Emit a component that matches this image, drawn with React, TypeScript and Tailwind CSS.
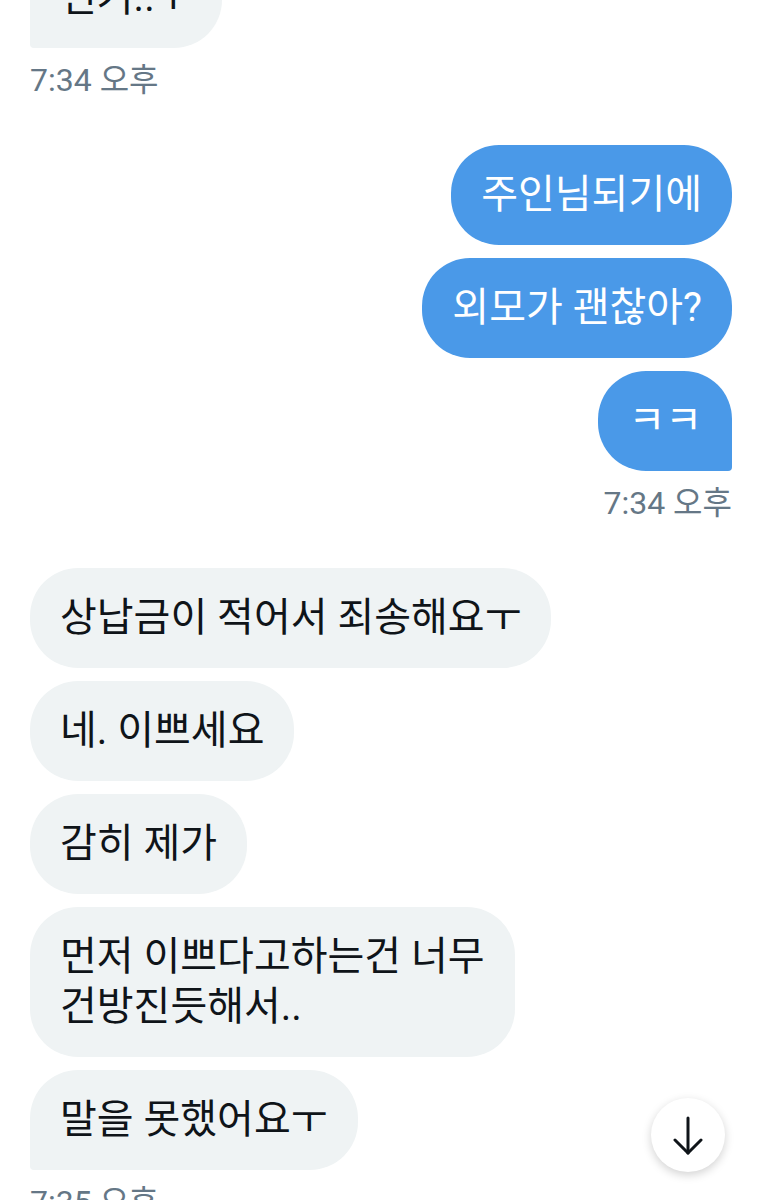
import { ReactNode } from "react";

type Side = "left" | "right";

interface Group {
  side: Side;
  messages: ReactNode[];
  time: string;
}

const groups: Group[] = [
  { side: "left", messages: ["런거..ㅜ"], time: "7:34 오후" },
  {
    side: "right",
    messages: ["주인님되기에", "외모가 괜찮아?", "ㅋㅋ"],
    time: "7:34 오후",
  },
  {
    side: "left",
    messages: [
      "상납금이 적어서 죄송해요ㅜ",
      "네. 이쁘세요",
      "감히 제가",
      <>
        먼저 이쁘다고하는건 너무
        <br />
        건방진듯해서..
      </>,
      "말을 못했어요ㅜ",
    ],
    time: "7:35 오후",
  },
];

const font = "font-['Roboto','Noto_Sans_CJK_KR',sans-serif]";

const Bubble = ({ side, last, children }: { side: Side; last: boolean; children: ReactNode }) => {
  const base = `px-[30px] py-[25px] text-[40px] leading-[50px] rounded-[48px] whitespace-nowrap ${font}`;
  if (side === "right") {
    return (
      <div
        className={`${base} self-end bg-[#4a99e8] text-white ${last ? "rounded-br-[4px]" : ""}`}
      >
        {children}
      </div>
    );
  }
  return (
    <div className={`${base} self-start bg-[#eff3f4] text-[#0f1419] ${last ? "rounded-bl-[4px]" : ""}`}>
      {children}
    </div>
  );
};

export default function App() {
  return (
    <div className="relative w-[762px] h-[1200px] overflow-hidden bg-white px-[30px]">
      <div className="flex flex-col -mt-[52px]">
        {groups.map((g, gi) => (
          <div key={gi} className={`flex flex-col gap-[13px] ${gi > 0 ? "mt-[45px]" : ""}`}>
            {g.messages.map((m, mi) => (
              <Bubble key={mi} side={g.side} last={mi === g.messages.length - 1}>
                {m}
              </Bubble>
            ))}
            <div
              className={`-mt-[1px] text-[32px] leading-[40px] text-[#657786] ${font} ${
                g.side === "right" ? "self-end" : "self-start"
              }`}
            >
              {g.time}
            </div>
          </div>
        ))}
      </div>

      <button
        className="absolute right-[37px] top-[1098px] w-[74px] h-[74px] rounded-full bg-white flex items-center justify-center shadow-[0_3px_10px_rgba(0,0,0,0.18)]"
        aria-label="scroll down"
      >
        <svg width="40" height="40" viewBox="0 0 40 40" fill="none" stroke="#0f1419" strokeWidth="3" strokeLinecap="round" strokeLinejoin="round">
          <path d="M20 3v35" />
          <path d="M7 25l13 13 13-13" />
        </svg>
      </button>
    </div>
  );
}
